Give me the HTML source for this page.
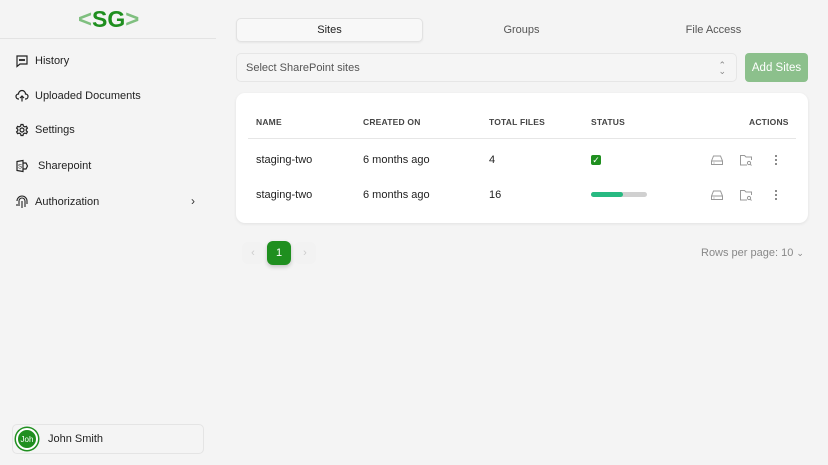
<!DOCTYPE html>
<html><head><style>
*{box-sizing:border-box;margin:0;padding:0}
body{width:828px;height:465px;background:#f4f4f4;font-family:"Liberation Sans",sans-serif;color:#222;position:relative;overflow:hidden;font-size:11px}
.logo{position:absolute;left:78px;top:6px;font-weight:bold;font-size:23px;letter-spacing:0px}
.logo .a{color:#7fbf7f;font-size:24px}.logo .b{color:#1f8f1f}
.hr{position:absolute;left:0;top:38px;width:216px;height:1px;background:#e3e3e3}
.nav{position:absolute;left:15px;font-size:11px;color:#222;display:flex;align-items:center}
.nav svg{width:14px;height:14px;margin-right:6px}
.user{position:absolute;left:12px;top:424px;width:192px;height:30px;border:1px solid #e4e4e4;border-radius:5px;display:flex;align-items:center;padding-left:3px}
.av{width:22px;height:22px;border-radius:50%;background:#1f8f1f;border:2px solid #fff;box-shadow:0 0 0 1.5px #1f8f1f;color:#fff;font-size:8px;display:flex;align-items:center;justify-content:center;margin-right:10px}
.tab{position:absolute;top:18px;height:24px;font-size:11px;display:flex;align-items:center;justify-content:center;color:#555}
.sel{position:absolute;left:236px;top:53px;width:501px;height:29px;border:1px solid #e6e6e6;border-radius:5px;background:#f5f5f5;color:#555;padding-left:9px;display:flex;align-items:center}
.btn{position:absolute;left:745px;top:53px;width:63px;height:29px;background:#8cc08c;border-radius:4px;color:#fff;display:flex;align-items:center;justify-content:center;font-size:11.5px}
.card{position:absolute;left:236px;top:93px;width:572px;height:130px;background:#fff;border-radius:9px;box-shadow:0 1px 3px rgba(0,0,0,.08)}
.th{position:absolute;top:24px;font-size:8.5px;color:#444;font-weight:bold;letter-spacing:.2px}
.td{position:absolute;font-size:11px;color:#222}
.ic{position:absolute;width:14px;height:14px}
</style></head><body>
<div class="logo"><span class="a">&lt;</span><span class="b">SG</span><span class="a">&gt;</span></div>
<div class="hr"></div>
<div class="nav" style="top:54px"><svg viewBox="0 0 14 14" fill="none" stroke="#222" stroke-width="1.2"><path d="M2 2h10v8H5l-3 2.5z"/><circle cx="5" cy="6" r=".5"/><circle cx="7" cy="6" r=".5"/><circle cx="9" cy="6" r=".5"/></svg>History</div>
<div class="nav" style="top:89px"><svg viewBox="0 0 14 14" fill="none" stroke="#222" stroke-width="1.2"><path d="M4 10H3.5a2.5 2.5 0 010-5 3.5 3.5 0 017 0 2.2 2.2 0 010 5H10M7 12.5V7M5 9l2-2 2 2"/></svg>Uploaded Documents</div>
<div class="nav" style="top:123px"><svg viewBox="0 0 14 14" fill="none" stroke="#222" stroke-width="1.2"><circle cx="7" cy="7" r="2"/><path d="M6 1.5h2l.4 1.6 1.4.8 1.6-.5 1 1.7-1.2 1.2v1.4l1.2 1.2-1 1.7-1.6-.5-1.4.8-.4 1.6H6l-.4-1.6-1.4-.8-1.6.5-1-1.7 1.2-1.2V6.3L1.6 5.1l1-1.7 1.6.5 1.4-.8z"/></svg>Settings</div>
<div class="nav" style="top:159px"><svg viewBox="0 0 14 14" fill="none" stroke="#222" stroke-width="1.2"><path d="M2 2.5l6-1v11l-6-1z M8 4h3l1.5 3L11 10H8"/><text x="3" y="9.5" font-size="6" fill="#222" stroke="none">S</text></svg>&nbsp;Sharepoint</div>
<div class="nav" style="top:195px"><svg viewBox="0 0 14 14" fill="none" stroke="#222" stroke-width="1.1"><path d="M2 6a5 5 0 0110 0v3M4 11V6a3 3 0 016 0v6M7 6v7M2 9v2"/></svg>Authorization</div>
<div style="position:absolute;left:191px;top:194px;font-size:12px;color:#333">›</div>
<div class="user"><div class="av">Joh</div><span style="font-size:11px">John Smith</span></div>

<div class="tab" style="left:236px;width:187px;background:#f8f8f8;border:1px solid #e2e2e2;border-radius:5px;box-shadow:0 1px 2px rgba(0,0,0,.06);color:#222">Sites</div>
<div class="tab" style="left:428px;width:187px">Groups</div>
<div class="tab" style="left:620px;width:187px">File Access</div>
<div class="sel">Select SharePoint sites<span style="position:absolute;right:10px;color:#888;font-size:9px;line-height:6px;text-align:center">⌃<br>⌄</span></div>
<div class="btn">Add Sites</div>

<div class="card">
<div class="th" style="left:20px">NAME</div>
<div class="th" style="left:127px">CREATED ON</div>
<div class="th" style="left:253px">TOTAL FILES</div>
<div class="th" style="left:355px">STATUS</div>
<div class="th" style="left:513px">ACTIONS</div>
<div style="position:absolute;left:12px;right:12px;top:45px;height:1px;background:#e6e6e6"></div>
<div class="td" style="left:20px;top:61px">staging-two</div>
<div class="td" style="left:127px;top:61px">6 months ago</div>
<div class="td" style="left:253px;top:61px">4</div>
<div style="position:absolute;left:355px;top:62px;width:10px;height:10px;background:#1f8f1f;border-radius:2px;color:#fff;font-size:9px;line-height:10px;text-align:center">✓</div>
<div class="td" style="left:20px;top:96px">staging-two</div>
<div class="td" style="left:127px;top:96px">6 months ago</div>
<div class="td" style="left:253px;top:96px">16</div>
<div style="position:absolute;left:355px;top:99px;width:56px;height:5px;background:#d0d0d0;border-radius:3px"><div style="width:32px;height:5px;background:#27b981;border-radius:3px"></div></div>
<svg class="ic" style="left:474px;top:60px" viewBox="0 0 14 14" fill="none" stroke="#999" stroke-width="1"><path d="M1.5 8l2-5h7l2 5v3.5h-11zM1.5 8h11M3.5 10h1"/></svg>
<svg class="ic" style="left:503px;top:60px" viewBox="0 0 14 14" fill="none" stroke="#999" stroke-width="1"><path d="M8 12H1.5V2.5h4l1.5 1.5h5.5V7"/><circle cx="10" cy="10" r="1.6"/><path d="M11.2 11.2l1.3 1.3"/></svg>
<svg class="ic" style="left:533px;top:60px" viewBox="0 0 14 14" fill="#666"><circle cx="7" cy="3" r="1"/><circle cx="7" cy="7" r="1"/><circle cx="7" cy="11" r="1"/></svg>
<svg class="ic" style="left:474px;top:95px" viewBox="0 0 14 14" fill="none" stroke="#999" stroke-width="1"><path d="M1.5 8l2-5h7l2 5v3.5h-11zM1.5 8h11M3.5 10h1"/></svg>
<svg class="ic" style="left:503px;top:95px" viewBox="0 0 14 14" fill="none" stroke="#999" stroke-width="1"><path d="M8 12H1.5V2.5h4l1.5 1.5h5.5V7"/><circle cx="10" cy="10" r="1.6"/><path d="M11.2 11.2l1.3 1.3"/></svg>
<svg class="ic" style="left:533px;top:95px" viewBox="0 0 14 14" fill="#666"><circle cx="7" cy="3" r="1"/><circle cx="7" cy="7" r="1"/><circle cx="7" cy="11" r="1"/></svg>
</div>

<div style="position:absolute;left:242px;top:242px;width:22px;height:22px;border-radius:6px;background:#f2f2f2;color:#ccc;text-align:center;line-height:22px">‹</div>
<div style="position:absolute;left:267px;top:241px;width:24px;height:24px;border-radius:6px;background:#1f8f1f;color:#fff;text-align:center;line-height:24px;box-shadow:0 2px 4px rgba(0,0,0,.2)">1</div>
<div style="position:absolute;left:294px;top:242px;width:22px;height:22px;border-radius:6px;background:#f2f2f2;color:#ccc;text-align:center;line-height:22px">›</div>
<div style="position:absolute;left:701px;top:247px;color:#888;font-size:11px">Rows per page: 10 <span style="font-size:9px">⌄</span></div>
</body></html>
